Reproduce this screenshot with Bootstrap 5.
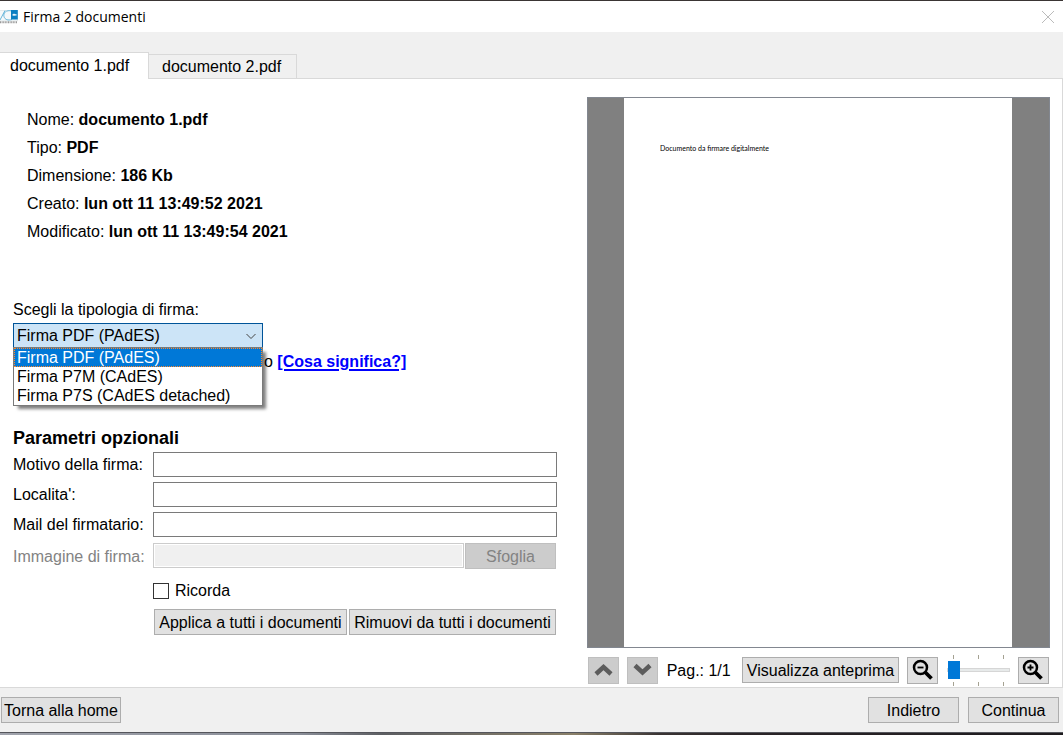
<!DOCTYPE html>
<html lang="it">
<head>
<meta charset="utf-8">
<meta name="viewport" content="width=device-width, initial-scale=1">
<title>Firma 2 documenti</title>
<link href="https://cdn.jsdelivr.net/npm/bootstrap@5.3.0/dist/css/bootstrap.min.css" rel="stylesheet">
<style>
  :root { --face: #f0f0f0; --line: #d9d9d9; --btn: #e1e1e1; --edge: #adadad; --accent: #0078d7; }
  body { font: 16px/24px "Liberation Sans", Arial, sans-serif; color: #000; background: #fff; }
  .titlebar { height: 32px; border-top: 1px solid #3a3534; font: 14px/30px "Open Sans", sans-serif; }
  .titlebar svg { margin-right: 5px; }
  .close-x { width: 30px; }
  .tab-strip { --bs-nav-tabs-border-width: 0; background: var(--face); height: 47px; }
  .tab-strip::after { content: ""; flex: 1; border-bottom: 1px solid var(--line); align-self: stretch; }
  .tab-strip .nav-link { height: 25px; min-width: 148px; text-align: left; padding: 0 12px 0 13px; line-height: 24px; color: #000; border: 1px solid var(--line); border-left: 0; border-radius: 0; margin: 0; background: var(--face); }
  .tab-strip .nav-link.active { height: 27px; min-width: 149px; padding: 0 12px 0 10px; line-height: 26px; background: #fff; color: #000; border: 1px solid var(--line); border-width: 1px 1px 0 0; }
  .work { display: grid; grid-template-columns: 544fr 463fr; column-gap: 30px; padding: 18px 12px 2px 13px; border-right: 1px solid var(--line); }
  .facts { padding: 9px 14px 0; line-height: 28px; margin-bottom: 52px; }
  .push { height: 26px; padding: 1px 2px 0; border: 1px solid var(--edge); border-radius: 0; background: var(--btn); color: #000; font-size: 16px; line-height: 23px; white-space: nowrap; }
  .push:disabled { background: #ccc; border-color: #bfbfbf; color: #838383; opacity: 1; }
  .push.wide { width: 91px; }
  .push.square { width: 31px; height: 27px; padding: 0; display: grid; place-items: center; }
  .combo { width: 250px; margin-top: 1px; }
  .combo select { height: 25px; padding: 0 24px 0 3px; border: 1px solid #005499; border-radius: 0; background-color: #cce4f7; background-position: right 5px center; background-size: 12px 12px; color: #000; font-size: 16px; line-height: 22px;
    background-image: url("data:image/svg+xml,%3csvg xmlns='http://www.w3.org/2000/svg' viewBox='0 0 12 12'%3e%3cpath fill='none' stroke='%23444' d='M1.5 4 6 8.5 10.5 4'/%3e%3c/svg%3e"); }
  .combo select:focus { box-shadow: none; }
  .choices { position: absolute; top: 100%; left: 0; z-index: 5; width: 250px; margin-top: -1px; border: 1px solid #7a7a7a; background: #fff; box-shadow: 4px 4px 3px -1px rgba(0,0,0,.5); line-height: 19px; }
  .choices li { padding: 0 3px; }
  .choices li[aria-selected=true] { background: var(--accent); color: #fff; outline: 1px dotted #ff8728; outline-offset: -1px; }
  .meaning { padding-left: 251px; margin-top: 2px; margin-bottom: 52px; }
  .meaning a { color: #00f; text-decoration-thickness: 2px; text-underline-offset: 2px; }
  h2 { font-size: 18px; line-height: 24px; margin-bottom: 2px; font-weight: 700; }
  .fields { display: grid; grid-template-columns: 140px 1fr; row-gap: 5px; line-height: 25px; white-space: nowrap; }
  .fields .form-control { height: 25px; min-height: 0; padding: 0 4px; border: 1px solid #7a7a7a; border-radius: 0; font-size: 16px; }
  .fields .form-control:disabled { border-color: #ccc; background: var(--face); box-shadow: inset 0 0 0 1px #fff; }
  .off { color: #838383; padding-top: 2px; }
  .picker { gap: 1px; padding: 1px 1px 0 0; }
  .remember { gap: 6px; margin: 4px 0 1px; }
  .both { gap: 2px; padding: 0 1px; }
  .both .push { padding-left: 1px; padding-right: 1px; }
  .tick { width: 16px; height: 16px; margin: 0; border: 1px solid #333; border-radius: 0 !important; }
  .preview { background: #808080; border: 1px solid #828790; padding: 0 37px 0 36px; min-height: 300px; }
  .sheet { background: #fff; padding: 43px 36px; font: 7px/14px Lato, sans-serif; }
  .tools { padding: 7px 1px 0; height: 37px; }
  .page-no { min-width: 67px; padding-top: 2px; }
  .view { min-width: 157px; }
  .zoomer { width: 63px; height: 31px; padding: 6px 0 7px;
    --t: linear-gradient(#a5a292, #a5a292);
    background: var(--t) 6px 0/1px 4px, var(--t) 31px 0/1px 4px, var(--t) 56px 0/1px 4px, var(--t) 6px 100%/1px 4px, var(--t) 31px 100%/1px 4px, var(--t) 56px 100%/1px 4px; background-repeat: no-repeat; }
  .zoomer input { height: 18px; width: 100%; display: block; }
  .zoomer input::-webkit-slider-runnable-track { height: 4px; border-radius: 0; background: #e7eaea; border: 1px solid #d6d6d6; }
  .zoomer input::-webkit-slider-thumb { width: 12px; height: 18px; margin-top: -8px; border-radius: 0; background: var(--accent); }
  .actions { background: var(--face); border-top: 1px solid var(--line); padding: 9px 4px 9px 1px; height: 45px; gap: 9px; }
  .desk { height: 3px; border-top: 1px solid #55565c; background: linear-gradient(90deg, #a0a3ac 0, #8b8f99 28%, #5c5e62 36%, #8a8069 54%, #3a3433 62%, #2a2427 70%, #1e1b1e 100%); }
</style>
</head>
<body class="d-flex flex-column min-vh-100">
<header class="titlebar d-flex align-items-center">
  <svg width="18" height="16" viewBox="0 0 18 16" aria-hidden="true">
    <path d="M0 1.500h17.500V12H0" fill="#f4f8fa" stroke="#d5dde1" stroke-width=".6"/>
    <path d="M0 11 5 1.500M12 2C6 .5 3 4 4 7.500S8 11.500 12 10.500" fill="none" stroke="#68b6da" stroke-width="1"/>
    <path d="M11 1h6.800v9.500H11z" fill="#0b7fc2"/><path d="M12.500 5.800h4M14 4.800v2" stroke="#fff" stroke-width="1.200"/>
    <path d="M0 13.200h17.500" stroke="#999" stroke-width="2" stroke-dasharray="1 .6"/>
  </svg>
  <span class="me-auto">Firma 2 documenti</span>
  <button type="button" class="close-x btn p-0 border-0 lh-1" aria-label="Chiudi"><svg width="12" height="12" viewBox="0 0 12 12" class="d-block mx-auto" stroke="#bbb"><path d="M0 0 12 12M12 0 0 12"/></svg></button>
</header>

<nav class="tab-strip nav nav-tabs flex-nowrap align-items-end" role="tablist">
  <button type="button" class="nav-link active" role="tab" aria-selected="true">documento 1.pdf</button>
  <button type="button" class="nav-link" role="tab" aria-selected="false">documento 2.pdf</button>
</nav>

<main class="work flex-grow-1">
  <section>
    <div class="facts">
      <div>Nome: <b>documento 1.pdf</b></div>
      <div>Tipo: <b>PDF</b></div>
      <div>Dimensione: <b>186 Kb</b></div>
      <div>Creato: <b>lun ott 11 13:49:52 2021</b></div>
      <div>Modificato: <b>lun ott 11 13:49:54 2021</b></div>
    </div>
    <label for="kind" class="d-block">Scegli la tipologia di firma:</label>
    <div class="combo position-relative">
      <select id="kind" class="form-select">
        <option>Firma PDF (PAdES)</option><option>Firma P7M (CAdES)</option><option>Firma P7S (CAdES detached)</option>
      </select>
      <ul class="choices list-unstyled mb-0" role="listbox" aria-label="Tipologia di firma">
        <li role="option" aria-selected="true">Firma PDF (PAdES)</li>
        <li role="option" aria-selected="false">Firma P7M (CAdES)</li>
        <li role="option" aria-selected="false">Firma P7S (CAdES detached)</li>
      </ul>
    </div>
    <div class="meaning">o <a href="#" class="fw-bold">[Cosa significa?]</a></div>

    <h2>Parametri opzionali</h2>
    <form class="fields">
      <label for="reason">Motivo della firma:</label><input id="reason" class="form-control">
      <label for="place">Localita':</label><input id="place" class="form-control">
      <label for="mail">Mail del firmatario:</label><input id="mail" type="email" class="form-control">
      <label for="image" class="off">Immagine di firma:</label>
      <div class="picker d-flex"><input id="image" class="form-control" disabled><button type="button" class="push wide flex-shrink-0" disabled>Sfoglia</button></div>
      <span></span>
      <div class="remember d-flex align-items-center"><input type="checkbox" id="keep" class="tick form-check-input"><label for="keep">Ricorda</label></div>
      <span></span>
      <div class="both d-flex"><button type="button" class="push flex-grow-1">Applica a tutti i documenti</button><button type="button" class="push flex-grow-1">Rimuovi da tutti i documenti</button></div>
    </form>
  </section>

  <section class="d-flex flex-column">
    <div class="preview flex-grow-1 d-flex"><div class="sheet flex-grow-1">Documento da firmare digitalmente</div></div>
    <div class="tools d-flex justify-content-between align-items-center text-nowrap">
      <button type="button" class="push square" disabled aria-label="Pagina precedente"><svg width="20" height="14" viewBox="0 0 20 14"><path d="m2 11 7.500-7 7.500 7" fill="none" stroke="#5c5c5c" stroke-width="4.500"/></svg></button>
      <button type="button" class="push square" disabled aria-label="Pagina successiva"><svg width="20" height="14" viewBox="0 0 20 14"><path d="m2 2.500 7.500 7 7.500-7" fill="none" stroke="#5c5c5c" stroke-width="4.500"/></svg></button>
      <span class="page-no">Pag.: 1/1</span>
      <button type="button" class="push view">Visualizza anteprima</button>
      <button type="button" class="push square" aria-label="Riduci"><svg width="22" height="22" viewBox="0 0 22 22" fill="none" stroke="#000"><circle cx="8.500" cy="8.500" r="6.500" stroke-width="2.500"/><path d="m13 13 6.500 6.500" stroke-width="3.800"/><path d="M5.500 8.500h6" stroke-width="1.800"/></svg></button>
      <div class="zoomer"><input type="range" class="form-range" min="0" max="2" value="0" aria-label="Zoom"></div>
      <button type="button" class="push square" aria-label="Ingrandisci"><svg width="22" height="22" viewBox="0 0 22 22" fill="none" stroke="#000"><circle cx="8.500" cy="8.500" r="6.500" stroke-width="2.500"/><path d="m13 13 6.500 6.500" stroke-width="3.800"/><path d="M5.500 8.500h6M8.500 5.500v6" stroke-width="1.800"/></svg></button>
    </div>
  </section>
</main>

<footer class="actions d-flex">
  <button type="button" class="push me-auto">Torna alla home</button>
  <button type="button" class="push wide">Indietro</button>
  <button type="button" class="push wide">Continua</button>
</footer>
<div class="desk"></div>
<script src="https://cdn.jsdelivr.net/npm/bootstrap@5.3.0/dist/js/bootstrap.bundle.min.js"></script>
</body>
</html>
